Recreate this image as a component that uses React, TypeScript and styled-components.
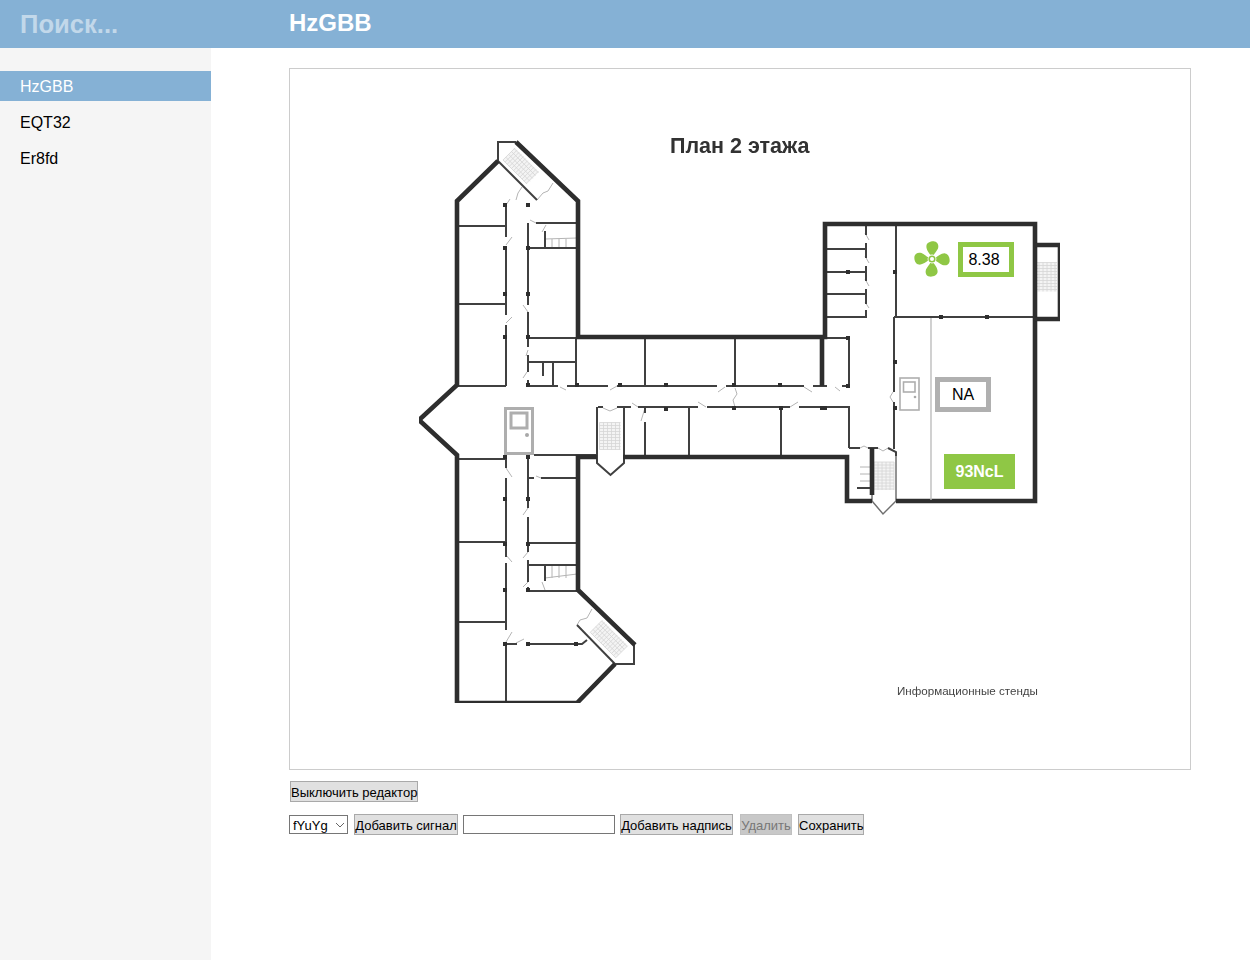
import React from "react";
import styled, { createGlobalStyle } from "styled-components";

const Global = createGlobalStyle`
  html, body { margin: 0; padding: 0; background: #fff; }
  body { font-family: "Liberation Sans", Arial, sans-serif; font-size: 16px; color: #000; }
`;

const Page = styled.div`
  display: flex;
  flex-direction: column;
  width: 1250px;
  height: 960px;
  overflow: hidden;
`;
const Header = styled.header`
  display: flex;
  align-items: center;
  flex: 0 0 48px;
  background: #85b1d5;
`;
const Search = styled.input`
  width: 211px;
  box-sizing: border-box;
  height: 48px;
  padding: 0 0 0 20px;
  border: 0;
  outline: 0;
  background: transparent;
  color: #fff;
  font: bold 25.6px "Liberation Sans", Arial, sans-serif;
  &::placeholder { color: rgba(255, 255, 255, 0.5); opacity: 1; }
`;
const Title = styled.h1`
  margin: 0 0 2px 78px;
  color: #fff;
  font: bold 24px "Liberation Sans", Arial, sans-serif;
`;
const Body = styled.div`
  display: flex;
  flex: 1;
  min-height: 0;
`;
const Sidebar = styled.nav`
  display: flex;
  flex-direction: column;
  gap: 6px;
  flex: 0 0 211px;
  box-sizing: border-box;
  padding-top: 23px;
  background: #f5f5f5;
`;
const NavItem = styled.div<{ $active?: boolean }>`
  height: 30px;
  line-height: 32px;
  padding-left: 20px;
  background: ${(p) => (p.$active ? "#85b1d5" : "transparent")};
  color: ${(p) => (p.$active ? "#fff" : "#000")};
`;
const Main = styled.main`
  flex: 1;
  padding: 20px 0 0 78px;
`;
const Canvas = styled.div`
  position: relative;
  box-sizing: border-box;
  width: 902px;
  height: 702px;
  border: 1px solid #ccc;
`;
const Plan = styled.svg`
  display: block;
  width: 900px;
  height: 700px;
`;
const Thick = styled.polyline`
  fill: none;
  stroke: #2d2d2d;
  stroke-width: 4.6;
  stroke-linejoin: miter;
`;
const Thin = styled.polyline`
  fill: none;
  stroke: #404040;
  stroke-width: 2;
`;
const Pale = styled.polyline`
  fill: none;
  stroke: #707070;
  stroke-width: 1.5;
`;
const Swing = styled.polyline`
  fill: none;
  stroke: #b4b4b4;
  stroke-width: 1;
`;
const Dot = styled.rect`
  fill: #2d2d2d;
`;
const HatchLine = styled.line`
  stroke: #d6d6d6;
  stroke-width: 0.8;
`;
const HatchBack = styled.rect`
  fill: #f4f4f4;
`;
const DoorFrame = styled.rect<{ $w: number }>`
  fill: #fff;
  stroke: #aeaeae;
  stroke-width: ${(p) => p.$w};
`;
const DoorKnob = styled.circle`
  fill: #a8a8a8;
`;
const Partition = styled.line`
  stroke: #bdbdbd;
  stroke-width: 1.4;
`;
const PlanTitle = styled.text`
  fill: #303030;
  font: bold 21.5px "Liberation Sans", Arial, sans-serif;
`;
const PlanNote = styled.text`
  fill: #444;
  font: 11.6px "Liberation Sans", Arial, sans-serif;
`;
const FanBlade = styled.path`
  fill: #8fc745;
`;
const FanRing = styled.circle`
  fill: #fff;
  stroke: #8fc745;
  stroke-width: 1.6;
`;
const FanHalo = styled.circle`
  fill: #fff;
`;
const FanIcon = styled.svg`
  position: absolute;
  left: 624px;
  top: 172px;
  width: 36px;
  height: 36px;
`;
const Signal = styled.div<{ $x: number; $y: number; $w: number; $tone: "green" | "gray"; $right?: number }>`
  position: absolute;
  left: ${(p) => p.$x}px;
  top: ${(p) => p.$y}px;
  box-sizing: border-box;
  width: ${(p) => p.$w}px;
  height: 35px;
  padding-right: ${(p) => p.$right ?? 0}px;
  border: 5px solid ${(p) => (p.$tone === "green" ? "#8fc745" : "#b0b0b0")};
  background: #fff;
  text-align: center;
  line-height: 25px;
  font-size: 16px;
`;
const Label = styled.div<{ $x: number; $y: number }>`
  position: absolute;
  left: ${(p) => p.$x}px;
  top: ${(p) => p.$y}px;
  width: 71px;
  height: 35px;
  background: #8fc745;
  color: #fff;
  text-align: center;
  line-height: 35px;
  font-size: 16px;
  font-weight: bold;
`;
const Toolbar = styled.div<{ $top: number }>`
  display: flex;
  align-items: center;
  margin-top: ${(p) => p.$top}px;
`;
const Btn = styled.button<{ $left?: number; $w: number }>`
  box-sizing: border-box;
  width: ${(p) => p.$w}px;
  height: 21px;
  margin-left: ${(p) => p.$left ?? 0}px;
  padding: 1px 0 0;
  border: 1px solid #a9a9a9;
  border-radius: 0;
  background: #e0e0e0;
  color: #000;
  font: 13px "Liberation Sans", Arial, sans-serif;
  white-space: nowrap;
  &:disabled { background: #c8c8c8; color: #777; border-color: #c0c0c0; }
`;
const PickerWrap = styled.div`
  position: relative;
  width: 59px;
  height: 19px;
`;
const Picker = styled.select`
  display: block;
  box-sizing: border-box;
  width: 59px;
  height: 19px;
  padding: 1px 0 0 3px;
  border: 1px solid #767676;
  border-radius: 0;
  background: #fff;
  appearance: none;
  font: 13px "Liberation Sans", Arial, sans-serif;
`;
const Chevron = styled.svg`
  position: absolute;
  right: 3px;
  top: 7px;
  width: 10px;
  height: 6px;
  pointer-events: none;
`;
const TextField = styled.input`
  box-sizing: border-box;
  width: 152px;
  height: 19px;
  margin-left: 5px;
  border: 1px solid #767676;
  padding: 0 2px;
`;

type P = [number, number][];
const pts = (p: P) => p.map((q) => q.join(",")).join(" ");

const thick: P[] = [
  [[498, 161], [457, 201], [457, 385], [419, 420], [457, 455], [457, 703], [577, 703], [615, 664]],
  [[516, 142], [578, 201], [578, 337], [825, 337], [825, 224], [1035, 224], [1035, 501], [896, 501]],
  [[1035, 245], [1060, 245], [1060, 319], [1035, 319]],
  [[872, 501], [847, 501], [847, 457], [623, 457]],
  [[597, 457], [578, 457], [578, 590], [635, 645]],
];
const heavy: P[] = [
  [[822, 337], [822, 386]],
  [[872, 448], [872, 495]],
];
const outlineThin: P[] = [
  [[498, 161], [498, 142], [516, 142]],
  [[498, 161], [537, 200]],
  [[634, 645], [634, 664], [615, 664]],
  [[577, 625], [615, 664]],
  [[597, 407], [597, 463], [610.5, 475], [624, 463], [624, 407]],
];
const pale: P[] = [
  [[872, 495], [872, 501], [883, 514], [896, 501], [896, 456]],
];
const thin: P[] = [
  [[506, 205], [506, 237]], [[506, 247], [506, 315]], [[506, 325], [506, 386]],
  [[457, 226], [506, 226]], [[457, 304], [506, 304]], [[457, 386], [506, 386]],
  [[528, 223], [528, 305]], [[528, 312], [528, 347]], [[528, 355], [528, 372]], [[528, 380], [528, 386]],
  [[536, 223], [577, 223]], [[528, 248], [577, 248]], [[545, 231], [545, 248]],
  [[528, 338], [577, 338]], [[528, 362], [577, 362]], [[543, 362], [543, 376]], [[553, 362], [553, 386]],
  [[528, 386], [558, 386]], [[567, 386], [608, 386]], [[617, 386], [717, 386]], [[726, 386], [804, 386]],
  [[813, 386], [827, 386]], [[842, 386], [849, 386]],
  [[576, 338], [576, 386]], [[645, 338], [645, 386]], [[735, 338], [735, 386]],
  [[822, 338], [849, 338], [849, 386]],
  [[598, 407], [603, 407]], [[617, 407], [631, 407]], [[638, 407], [698, 407]], [[707, 407], [790, 407]], [[799, 407], [849, 407], [849, 448]],
  [[645, 408], [645, 413]], [[645, 422], [645, 457]], [[689, 407], [689, 457]], [[781, 407], [781, 457]],
  [[849, 448], [860, 448]], [[868, 448], [878, 448]], [[888, 448], [896, 452], [896, 456]],
  [[857, 488], [872, 488]],
  [[866, 224], [866, 235]], [[866, 243], [866, 258]], [[866, 266], [866, 281]], [[866, 289], [866, 304]], [[866, 310], [866, 318]],
  [[826, 249], [866, 249]], [[826, 272], [866, 272]], [[826, 294], [866, 294]], [[826, 317], [866, 317]],
  [[896, 224], [896, 317]], [[894, 317], [1035, 317]], [[894, 317], [894, 392]], [[894, 402], [894, 449]],
  [[457, 459], [506, 459]], [[506, 456], [506, 468]], [[506, 478], [506, 557]], [[506, 563], [506, 630]], [[506, 643], [506, 702]],
  [[457, 542], [506, 542]], [[457, 622], [506, 622]],
  [[528, 456], [528, 508]], [[528, 517], [528, 552]], [[528, 560], [528, 582]], [[528, 587], [528, 591]],
  [[528, 478], [534, 478]], [[541, 478], [577, 478]], [[528, 543], [577, 543]], [[528, 565], [577, 565]], [[528, 591], [577, 591]],
  [[545, 565], [545, 581]],
  [[505, 644], [517, 644]], [[527, 644], [582, 644], [587, 640]],
  [[534, 455], [597, 455]],
];
const ticks: P[] = [
  [[552, 239], [552, 248]], [[559, 239], [559, 248]], [[566, 239], [566, 248]],
  [[552, 565], [552, 578]], [[559, 565], [559, 578]], [[566, 565], [566, 578]],
  [[860, 467], [872, 467]], [[860, 474], [872, 474]], [[860, 481], [872, 481]],
];
const swings: P[] = [
  [[506, 245], [512, 237]], [[506, 323], [512, 317]], [[528, 312], [523, 305]], [[528, 350], [526, 356]],
  [[527, 372], [523, 378]], [[536, 223], [530, 220]], [[542, 232], [546, 225]], [[516, 200], [518, 193], [522, 187]],
  [[537, 200], [543, 193], [548, 191], [553, 183]], [[545, 239], [577, 238]], [[506, 205], [510, 199]],
  [[560, 387], [566, 390]], [[610, 390], [617, 386]], [[718, 392], [725, 387]], [[804, 387], [812, 392]], [[835, 387], [840, 391]],
  [[632, 403], [638, 407]], [[698, 402], [706, 407]], [[790, 407], [798, 402]], [[645, 408], [641, 421]],
  [[603, 408], [610, 411], [617, 408]], [[878, 448], [883, 451], [888, 448]], [[860, 448], [864, 446], [868, 448]],
  [[865, 233], [869, 240]], [[865, 256], [869, 263]], [[865, 279], [869, 286]], [[865, 302], [869, 308]],
  [[893, 392], [890, 397], [893, 402]],
  [[506, 468], [512, 477]], [[528, 508], [523, 515]], [[506, 555], [512, 562]], [[528, 552], [523, 558]],
  [[528, 582], [523, 587]], [[512, 632], [506, 642]], [[524, 639], [516, 643]], [[541, 478], [536, 476]],
  [[545, 590], [542, 582]], [[545, 578], [577, 574]], [[577, 625], [580, 620], [587, 618], [592, 609]],
];
const wavy: P = [[735, 388], [737, 394], [733, 400], [735, 407]];
const dots: P = [
  [505, 205], [528, 205], [505, 248], [528, 248], [505, 294], [528, 294], [505, 337], [528, 337], [528, 385], [577, 385],
  [620, 385], [666, 385], [734, 385], [780, 385], [666, 409], [734, 408], [781, 408], [895, 362], [895, 408],
  [848, 272], [895, 272], [941, 317], [987, 317], [505, 457], [528, 457], [505, 499], [528, 499], [505, 544], [528, 544],
  [505, 590], [528, 590], [505, 644], [528, 644], [576, 644], [822, 408], [825, 408], [848, 386], [848, 338],
];

const Hatch = ({ x, y, w, h, rot }: { x: number; y: number; w: number; h: number; rot: number }) => {
  const v = Array.from({ length: Math.floor(w / 4) + 1 }, (_, i) => x - w / 2 + i * 4);
  const hh = Array.from({ length: Math.floor(h / 3) + 1 }, (_, i) => y - h / 2 + i * 3);
  return (
    <g transform={`rotate(${rot} ${x} ${y})`}>
      <HatchBack x={x - w / 2} y={y - h / 2} width={w} height={h} />
      {v.map((a) => <HatchLine key={`v${a}`} x1={a} x2={a} y1={y - h / 2} y2={y + h / 2} />)}
      {hh.map((a) => <HatchLine key={`h${a}`} x1={x - w / 2} x2={x + w / 2} y1={a} y2={a} />)}
    </g>
  );
};

const blade = "M-0.8 -3 C-3 -6 -6 -9.5 -5.6 -13 C-5.2 -16.5 -1 -18 2.5 -17.6 C6 -17 7 -13.5 6 -10.5 C5 -8 2.2 -5.6 1.4 -3 Z";

export default function App() {
  return (
    <Page>
      <Global />
      <Header>
        <Search placeholder="Поиск..." />
        <Title>HzGBB</Title>
      </Header>
      <Body>
        <Sidebar>
          <NavItem $active>HzGBB</NavItem>
          <NavItem>EQT32</NavItem>
          <NavItem>Er8fd</NavItem>
        </Sidebar>
        <Main>
          <Canvas>
            <Plan viewBox="290 69 900 700">
              <defs>
                <filter id="soft" x="0" y="0" width="100%" height="100%">
                  <feGaussianBlur stdDeviation="0.4" />
                </filter>
              </defs>
              <g filter="url(#soft)">
                <Hatch x={521} y={166} w={17} h={34} rot={-45} />
                <Hatch x={610} y={436} w={21} h={27} rot={0} />
                <Hatch x={884} y={476} w={20} h={28} rot={0} />
                <Hatch x={1046} y={277} w={22} h={29} rot={0} />
                <Hatch x={609} y={639} w={17} h={36} rot={-45} />
                {ticks.map((p, i) => <Swing key={i} points={pts(p)} />)}
                {swings.map((p, i) => <Swing key={i} points={pts(p)} />)}
                {pale.map((p, i) => <Pale key={i} points={pts(p)} />)}
                {thin.map((p, i) => <Thin key={i} points={pts(p)} />)}
                {outlineThin.map((p, i) => <Thin key={i} points={pts(p)} />)}
                {heavy.map((p, i) => <Thick key={i} points={pts(p)} />)}
                {thick.map((p, i) => <Thick key={i} points={pts(p)} />)}
                <Swing points={pts(wavy)} />
                {dots.map(([x, y], i) => <Dot key={i} x={x - 2} y={y - 2} width={4} height={4} />)}
                <Partition x1={931} y1={318} x2={931} y2={500} />
                <DoorFrame $w={3} x={505.5} y={408.5} width={27} height={45} />
                <DoorFrame $w={3} x={511} y={413} width={16} height={15} />
                <DoorKnob cx={527} cy={435} r={2} />
                <DoorFrame $w={1.6} x={900} y={378} width={19} height={32} />
                <DoorFrame $w={1.6} x={903.5} y={382} width={11.5} height={10} />
                <DoorKnob cx={915} cy={397} r={1.3} />
                <PlanTitle x={670} y={153}>План 2 этажа</PlanTitle>
                <PlanNote x={897} y={695}>Информационные стенды</PlanNote>
              </g>
            </Plan>
            <FanIcon viewBox="-18 -18 36 36">
              <FanBlade d={blade} />
              <FanBlade d={blade} transform="rotate(90)" />
              <FanBlade d={blade} transform="rotate(180)" />
              <FanBlade d={blade} transform="rotate(270)" />
              <FanHalo cx={0} cy={0} r={4.4} />
              <FanRing cx={0} cy={0} r={2.8} />
            </FanIcon>
            <Signal $x={668} $y={173} $w={56} $tone="green" $right={4}>8.38</Signal>
            <Signal $x={645} $y={308} $w={56} $tone="gray">NA</Signal>
            <Label $x={654} $y={385}>93NcL</Label>
          </Canvas>
          <Toolbar $top={11}>
            <Btn $left={1} $w={128}>Выключить редактор</Btn>
          </Toolbar>
          <Toolbar $top={12}>
            <PickerWrap>
              <Picker defaultValue="fYuYg">
                <option>fYuYg</option>
              </Picker>
              <Chevron viewBox="0 0 10 6">
                <polyline points="1,1 5,5 9,1" fill="none" stroke="#666" strokeWidth="1" />
              </Chevron>
            </PickerWrap>
            <Btn $left={6} $w={104}>Добавить сигнал</Btn>
            <TextField />
            <Btn $left={5} $w={113}>Добавить надпись</Btn>
            <Btn $left={7} $w={52} disabled>Удалить</Btn>
            <Btn $left={6} $w={66}>Сохранить</Btn>
          </Toolbar>
        </Main>
      </Body>
    </Page>
  );
}
